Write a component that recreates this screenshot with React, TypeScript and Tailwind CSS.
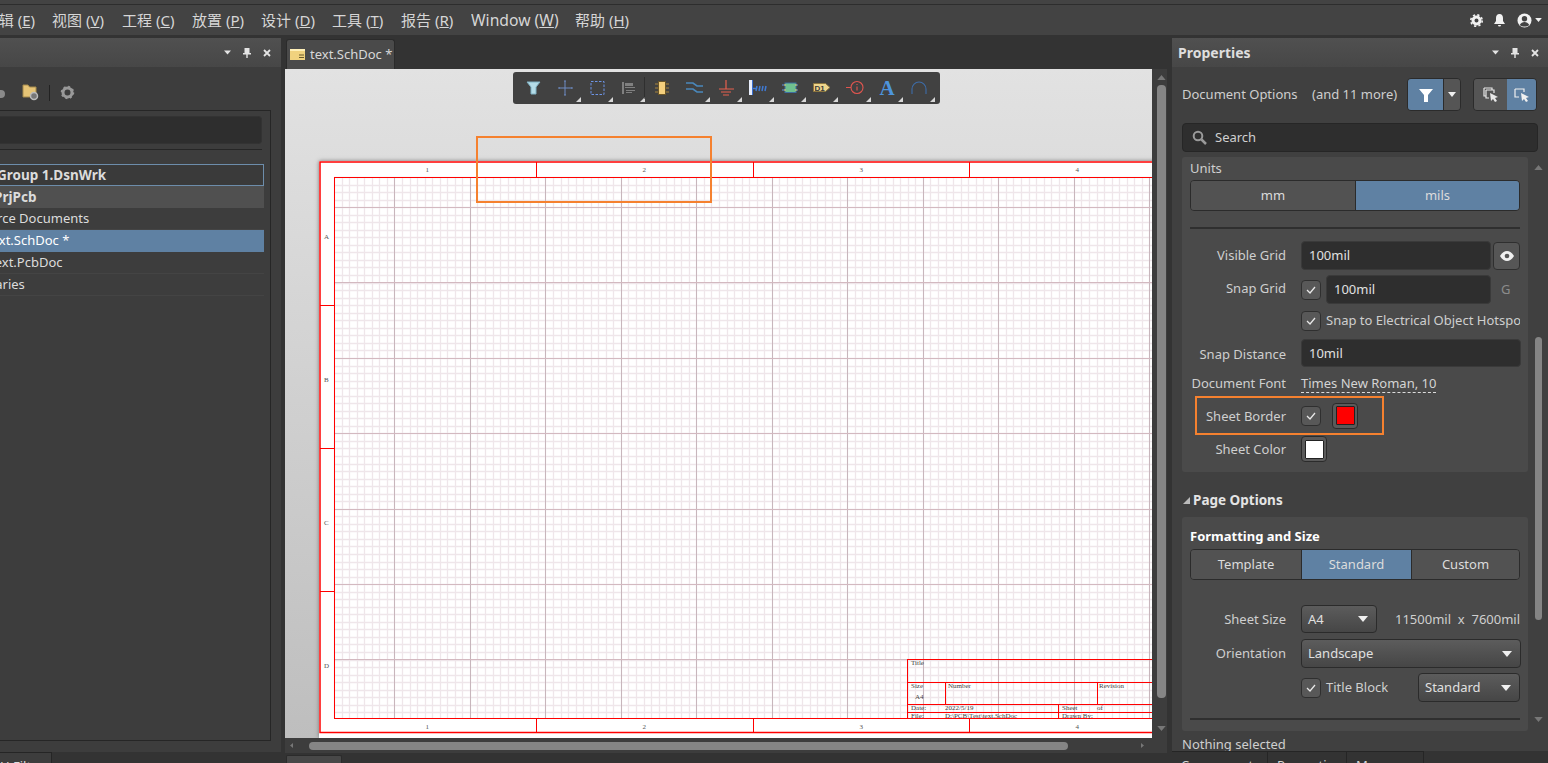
import type { ReactNode } from 'react'

const FONT = 'font-["Noto_Sans","Noto_Sans_CJK_SC",sans-serif]'

const MENU = [
  { zh: '编辑', key: 'E', width: 'w-[52px]', clip: true },
  { zh: '视图', key: 'V', width: 'w-[70px]' },
  { zh: '工程', key: 'C', width: 'w-[70px]' },
  { zh: '放置', key: 'P', width: 'w-[69px]' },
  { zh: '设计', key: 'D', width: 'w-[71px]' },
  { zh: '工具', key: 'T', width: 'w-[69px]' },
  { zh: '报告', key: 'R', width: 'w-[70px]' },
  { zh: 'Window', key: 'W', width: 'w-[104px] pt-[2px] text-[15.7px]' },
  { zh: '帮助', key: 'H', width: 'w-[70px]' },
]

function Caret({ className = '' }: { className?: string }) {
  return (
    <svg width="10" height="6" viewBox="0 0 10 6" className={`shrink-0 ${className}`}>
      <path d="M0 0h10L5 6z" fill="currentColor" />
    </svg>
  )
}

function Pin() {
  return (
    <svg width="8" height="10" viewBox="0 0 8 10">
      <path d="M1.500 0h5v5H8v1.500H4.700V10H3.300V6.500H0V5h1.500z" fill="#e4e4e4" />
    </svg>
  )
}

function Cross() {
  return (
    <svg width="8" height="8" viewBox="0 0 8 8">
      <path d="M1 1l6 6M7 1L1 7" stroke="#e4e4e4" strokeWidth="1.800" />
    </svg>
  )
}

function PanelHeader({ title, gap }: { title?: string; gap: string }) {
  return (
    <div className="flex h-[29px] shrink-0 items-center bg-gradient-to-b from-[#505050] to-[#474747] pl-[6px]">
      <span className="flex-1 text-[14px] font-bold text-[#dedede]">{title}</span>
      <div className={`flex items-center gap-[12px] ${gap}`}>
        <Caret className="h-[5px] w-[7px] text-[#e4e4e4]" />
        <Pin />
        <Cross />
      </div>
    </div>
  )
}

function TreeRow({ text, shift, className = '' }: { text: string; shift: string; className?: string }) {
  return (
    <div className={`flex h-[22px] items-center overflow-hidden whitespace-nowrap border-b border-[#444] pt-px text-[13px] ${className}`}>
      <span className={shift}>{text}</span>
    </div>
  )
}

function LeftPanel() {
  return (
    <div className="flex w-[281px] shrink-0 flex-col bg-[#3d3d3d]">
      <PanelHeader gap="pr-[10px]" />
      <div className="flex h-[43px] shrink-0 items-center pt-[8px]">
        <svg width="8" height="12" viewBox="0 0 8 12">
          <circle cx="1" cy="7" r="4" fill="#8a8a8a" />
        </svg>
        <svg width="18" height="17" viewBox="0 0 18 17" className="ml-[14px]">
          <path d="M1 1h5l1.500 2H14v10H1z" fill="#e6c476" stroke="#a58a4c" />
          <circle cx="12" cy="12" r="3.500" fill="#777" stroke="#bbb" strokeWidth="1.500" />
        </svg>
        <div className="ml-[9px] h-[16px] w-px bg-[#222]" />
        <svg width="15" height="15" viewBox="0 0 15 15" className="ml-[10px]">
          <circle cx="7.500" cy="7.500" r="4.500" fill="none" stroke="#999" strokeWidth="3" />
          <circle cx="7.500" cy="7.500" r="6" fill="none" stroke="#999" strokeWidth="1.500" strokeDasharray="2 2.700" />
        </svg>
      </div>
      <div className="mr-[10px] flex h-[631px] shrink-0 flex-col border-y border-r border-[#262626] pr-[8px] pt-[5px]">
        <div className="h-[28px] shrink-0 rounded-r-[4px] border border-l-0 border-[#333] bg-[#2e2e2e]" />
        <div className="mt-[5px] h-px shrink-0 bg-[#262626]" />
        <div className="mt-[14px] -mr-[2px] flex flex-col text-[#dcdcdc]">
          <div className="flex h-[22px] items-center overflow-hidden whitespace-nowrap border border-l-0 border-[#6d8dab] bg-[#3a3a3a] text-[13.5px] font-bold">
            <span className="-ml-[3px]">Group 1.DsnWrk</span>
          </div>
          <TreeRow text="text.PrjPcb" shift="-ml-[37px] font-bold text-[13.5px]" className="border-transparent bg-[#505050]" />
          <TreeRow text="Source Documents" shift="-ml-[26px]" />
          <TreeRow text="text.SchDoc *" shift="-ml-[13px] text-white" className="border-transparent bg-[#5f81a3]" />
          <TreeRow text="text.PcbDoc" shift="-ml-[10px]" />
          <TreeRow text="Libraries" shift="-ml-[28px]" />
        </div>
      </div>
      <div className="mt-[11px] flex flex-1 overflow-hidden bg-[#333]">
        <div className="h-[20px] w-[52px] overflow-hidden whitespace-nowrap border-r border-t border-[#252525] bg-[#3d3d3d] pt-[4px] text-right text-[13px] leading-[18px] text-[#dcdcdc]">
          <span className="pr-[20px]">H Filt</span>
        </div>
      </div>
    </div>
  )
}

function Triangle({ on = true }: { on?: boolean }) {
  if (!on) return null
  return <path d="M32 27v-5l-5 5z" fill="#d8d8d8" />
}

const TOOL_ICONS: { corner: boolean; draw: ReactNode }[] = [
  { corner: false, draw: <path d="M10 7h13l-4 5v7h-5v-7z" fill="#b4dce8" stroke="#7fb1c4" /> },
  {
    corner: true,
    draw: (
      <g stroke="#6f8cc4" strokeWidth="1" fill="none">
        <path d="M16 6v14M10 13h13M15 6h2M15 20h2M10 12v2M23 12v2" />
      </g>
    ),
  },
  { corner: true, draw: <rect x="10" y="6.500" width="13" height="13" fill="none" stroke="#6d94e6" strokeWidth="1" strokeDasharray="2.500 1.500" /> },
  {
    corner: true,
    draw: (
      <g fill="#808080">
        <rect x="9" y="7" width="2" height="12" />
        <rect x="12" y="8" width="8" height="3" />
        <rect x="12" y="12" width="10" height="1" />
        <path d="M13 15h9v1h-9zM13 17h6v1h-6z" />
      </g>
    ),
  },
  {
    corner: false,
    draw: (
      <g>
        <path d="M9 9h14M9 13h14M9 17h14" stroke="#a8853e" />
        <rect x="12.500" y="6.500" width="7" height="13" fill="#f4cf7d" stroke="#6b5628" />
      </g>
    ),
  },
  {
    corner: true,
    draw: (
      <g stroke="#4a88bc" strokeWidth="1.600" fill="none">
        <path d="M8 8h7l4 3h6M8 14h7l4 3h6" />
      </g>
    ),
  },
  {
    corner: true,
    draw: (
      <g stroke="#e8604e" strokeWidth="1.200">
        <path d="M16 5v9M9 14h15M11 17h10M13 20h6" />
      </g>
    ),
  },
  {
    corner: true,
    draw: (
      <g>
        <rect x="7" y="5" width="3" height="15" fill="#e8eefc" />
        <rect x="10" y="5" width="1" height="15" fill="#3a6fd0" />
        <path d="M14 16l1-5M17 16l1-5M20 16l1-5M23 16l1-5M11 13.500h3" stroke="#3f7ad4" strokeWidth="1.500" />
      </g>
    ),
  },
  {
    corner: true,
    draw: (
      <g>
        <path d="M8 10h16M8 15h16" stroke="#5f8fe0" strokeDasharray="2 1" />
        <rect x="11" y="8" width="11" height="9.500" fill="#6fc08f" stroke="#3f6fa0" />
        <path d="M11 9v2M11 14v2M22 9v2M22 14v2" stroke="#f0e070" />
      </g>
    ),
  },
  {
    corner: true,
    draw: (
      <g>
        <path d="M7.500 8.500h12l4.500 4-4.500 4h-12z" fill="#efd58c" stroke="#8d7740" />
        <text x="8.500" y="15.500" fontFamily="Liberation Sans" fontSize="8" fontWeight="bold" fill="#3a3a3a">D1</text>
      </g>
    ),
  },
  {
    corner: true,
    draw: (
      <g stroke="#e0554f" fill="none" strokeWidth="1.100">
        <circle cx="18" cy="12.500" r="6" />
        <path d="M7 12.500h5M18 9v1M18 11.500v4" />
      </g>
    ),
  },
  { corner: true, draw: <text x="16" y="20" textAnchor="middle" fontFamily="Liberation Serif" fontSize="21" fontWeight="bold" fill="#4d94dc">A</text> },
  { corner: true, draw: <path d="M9 19v-5a7 7 0 0 1 14 0v5" fill="none" stroke="#3d6ca8" strokeWidth="1.100" /> },
]

function ToolStrip() {
  return (
    <div className="absolute left-[228px] top-[3px] flex h-[32px] items-center gap-[0.17px] rounded-[3px] bg-[#414141] pl-[4px] pr-[5px]">
      {TOOL_ICONS.map((tool, i) => (
        <svg key={i} width="32" height="27" viewBox="0 0 32 27" className="mt-px shrink-0">
          {tool.draw}
          <Triangle on={tool.corner} />
          {i === 3 && <path d="M32 2v22" stroke="#1f1f1f" />}
        </svg>
      ))}
    </div>
  )
}

const range = (start: number, step: number, end: number) => {
  const out: number[] = []
  for (let v = start; v <= end; v += step) out.push(Math.round(v) + 0.5)
  return out
}

// sheet is in screen coordinates through the viewBox, simplest way to check against the picture
function Sheet() {
  const minorX = range(334, 7.55, 1152)
  const minorY = range(177, 7.54, 718)
  const majorX = range(394, 75.5, 1152)
  const majorY = range(207, 75.4, 700)
  const red = '#ff0000'
  const cell = (x: number, y: number, s: string) => (
    <text key={s + x} x={x} y={y} fontFamily="Liberation Serif" fontSize="7" fill="#444">{s}</text>
  )
  return (
    <svg width="840" height="577" viewBox="319 161 840 577" className="ml-[34px] mt-[92px] block shrink-0 bg-white shadow-[0_0_4px_#777]">
      {minorX.map(x => <path key={x} d={`M${x} 177V718`} stroke="#efe6ea" strokeWidth="1.300" />)}
      {minorY.map(y => <path key={y} d={`M334 ${y}H1160`} stroke="#efe6ea" strokeWidth="1.300" />)}
      <g shapeRendering="crispEdges">
        {majorX.map(x => <path key={x} d={`M${x} 177V718`} stroke="#c8b6bc" />)}
        {majorY.map(y => <path key={y} d={`M334 ${y}H1160`} stroke="#d3b9c0" />)}
        <path d="M1170 177.500H334.500V718.500H1170" fill="none" stroke={red} />
        {[536, 753, 969].map(x => (
          <path key={x} d={`M${x + 0.5} 162V177M${x + 0.5} 718V732`} stroke={red} />
        ))}
        {[305, 448, 591].map(y => <path key={y} d={`M320 ${y + 0.5}H334`} stroke={red} />)}
        <g stroke={red} fill="none">
          <path d="M907.500 718V659.500H1170M907 682.500H1170M907 704.500H1170M907 712.500H1170" />
          <path d="M945.500 682V704M1097.500 682V704M1058.500 704V718" />
        </g>
      </g>
      <rect x="320" y="162" width="860" height="570.500" fill="none" stroke={red} strokeWidth="1.500" />
      {[[425.500, '1'], [642.500, '2'], [859.500, '3'], [1075.500, '4']].map(([x, s]) => (
        <g key={s} fontFamily="Liberation Serif" fontSize="7" fill="#555">
          <text x={x} y="172">{s}</text>
          <text x={x} y="729">{s}</text>
        </g>
      ))}
      {[[239, 'A'], [382, 'B'], [525, 'C'], [668, 'D']].map(([y, s]) => (
        <text key={s} x="324" y={y} fontFamily="Liberation Serif" fontSize="7" fill="#555">{s}</text>
      ))}
      {cell(911, 665, 'Title')}
      {cell(911, 688, 'Size')}
      {cell(915, 699, 'A4')}
      {cell(948, 688, 'Number')}
      {cell(1099, 688, 'Revision')}
      {cell(911, 710, 'Date:')}
      {cell(945, 710, '2022/5/19')}
      {cell(1062, 710, 'Sheet')}
      {cell(1097, 710, 'of')}
      {cell(911, 718, 'File:')}
      {cell(945, 718, 'D:\\PCB\\Test\\text.SchDoc')}
      {cell(1062, 718, 'Drawn By:')}
    </svg>
  )
}

function Editor() {
  return (
    <div className="flex w-[882px] shrink-0 flex-col">
      <div className="flex h-[31px] shrink-0 pl-px">
        <div className="mt-px flex h-[30px] w-[109px] items-center rounded-t-[3px] border border-b-0 border-[#2b2b2b] bg-[#4a4a4a] pl-[3px]">
          <svg width="15" height="11" viewBox="0 0 15 11" className="shrink-0">
            <rect width="15" height="11" fill="#f0d27e" />
            <path d="M0 0h15v2H0z" fill="#fff0b8" />
            <path d="M9 6h5M9 8.500h5" stroke="#6b5a2a" />
          </svg>
          <span className="ml-[5px] whitespace-nowrap text-[13px] text-[#d8d8d8]">text.SchDoc *</span>
        </div>
      </div>
      <div className="flex h-[669px] shrink-0">
        <div className="relative flex w-[867px] shrink-0 flex-col overflow-hidden bg-gradient-to-b from-[#e2e2e2] to-[#bebebe]">
          <Sheet />
          <ToolStrip />
          <div className="absolute left-[191px] top-[67px] h-[67px] w-[236px] border-2 border-[#f5812f]" />
        </div>
        <div className="flex w-[15px] shrink-0 flex-col items-center bg-[#3d3d3d] pl-[4px]">
          <Caret className="mt-[6px] h-[5px] w-[9px] rotate-180 text-[#777]" />
          <div className="mt-[5px] h-[613px] w-[9px] rounded-[4px] bg-[#858585]" />
          <Caret className="mt-[28px] h-[5px] w-[9px] text-[#777]" />
        </div>
      </div>
      <div className="flex h-[15px] shrink-0 items-center bg-[#3d3d3d]">
        <Caret className="ml-[4px] h-[9px] w-[5px] rotate-90 text-[#777]" />
        <div className="ml-[15px] h-[8px] w-[759px] rounded-[4px] bg-[#858585]" />
        <Caret className="ml-[72px] h-[9px] w-[5px] -rotate-90 text-[#777]" />
      </div>
      <div className="flex flex-1 bg-[#333] pl-px pt-[2px]">
        <div className="w-[56px] rounded-t-[2px] border border-b-0 border-[#2b2b2b] bg-[#484848]" />
      </div>
    </div>
  )
}

function Segments({ items, active, width }: { items: string[]; active: string; width: string[] }) {
  return (
    <div className="flex h-[31px] shrink-0 overflow-hidden rounded-[4px] border border-[#2b2b2b] text-[13px] text-[#dcdcdc]">
      {items.map((item, i) => (
        <div
          key={item}
          className={`flex items-center justify-center ${width[i]} ${i > 0 ? 'border-l border-[#2b2b2b]' : ''} ${item === active ? 'bg-[#5f81a3]' : 'bg-[#525252]'}`}
        >
          {item}
        </div>
      ))}
    </div>
  )
}

function Label({ children }: { children: ReactNode }) {
  return <div className="w-[96px] shrink-0 whitespace-nowrap pt-px text-right text-[13px] text-[#cfcfcf]">{children}</div>
}

function Field({ value, className = '' }: { value: string; className?: string }) {
  return (
    <div className={`flex h-full shrink-0 items-center rounded-[4px] border border-[#3a3a3a] bg-[#2e2e2e] pl-[7px] pt-px text-[13px] text-[#e0e0e0] ${className}`}>
      {value}
    </div>
  )
}

function Check({ className = '' }: { className?: string }) {
  return (
    <div className={`flex h-[20px] w-[20px] shrink-0 items-center justify-center rounded-[4px] border border-[#2f2f2f] bg-[#585858] ${className}`}>
      <svg width="10" height="8" viewBox="0 0 10 8">
        <path d="M1 4l3 3 5-6" fill="none" stroke="#e8e8e8" strokeWidth="1.300" />
      </svg>
    </div>
  )
}

function Swatch({ color, className = '' }: { color: string; className?: string }) {
  return (
    <div className={`flex h-[26px] w-[26px] shrink-0 items-center justify-center rounded-[4px] border border-[#2b2b2b] bg-[#5a5a5a] ${className}`}>
      <div className={`h-[19px] w-[19px] rounded-[1px] border border-[#222] ${color}`} />
    </div>
  )
}

function Dropdown({ value, className = '' }: { value: string; className?: string }) {
  return (
    <div className={`flex h-full shrink-0 items-center justify-between rounded-[4px] border border-[#2b2b2b] bg-gradient-to-b from-[#5c5c5c] to-[#464646] pl-[6px] pr-[8px] text-[13px] text-[#e0e0e0] ${className}`}>
      <span className="pt-px">{value}</span>
      <Caret className="text-[#f0f0f0]" />
    </div>
  )
}

function PropertiesPanel() {
  return (
    <div className="flex w-[376px] shrink-0 flex-col bg-[#404040]">
      <PanelHeader title="Properties" gap="pr-[9px]" />
      <div className="mt-[11px] flex h-[33px] shrink-0 items-center pl-[10px]">
        <span className="w-[130px] shrink-0 whitespace-nowrap text-[13px] text-[#cfcfcf]">Document Options</span>
        <span className="w-[95px] shrink-0 whitespace-nowrap text-[13px] text-[#cfcfcf]">(and 11 more)</span>
        <div className="flex h-[33px] w-[54px] shrink-0 overflow-hidden rounded-[4px] border border-[#2b2b2b]">
          <div className="flex w-[35px] items-center justify-center bg-[#5f81a3]">
            <svg width="14" height="14" viewBox="0 0 14 14">
              <path d="M0 1h14L9 7v7H5V7z" fill="#fff" />
            </svg>
          </div>
          <div className="flex flex-1 items-center justify-center border-l border-[#2b2b2b] bg-[#555]">
            <Caret className="h-[5px] w-[8px] text-[#f0f0f0]" />
          </div>
        </div>
        <div className="ml-[12px] flex h-[33px] w-[64px] shrink-0 overflow-hidden rounded-[4px] border border-[#2b2b2b]">
          <div className="flex w-[33px] items-center justify-center bg-[#555]">
            <svg width="16" height="16" viewBox="0 0 16 16">
              <path d="M1 1h8v2M1 1v8h2M3 3h8v3M3 3v8h3" fill="none" stroke="#e8e8e8" strokeWidth="1.200" />
              <path d="M7 6l8 4-3 1 2 3-2 1-2-3-2 2z" fill="#e8e8e8" />
            </svg>
          </div>
          <div className="flex flex-1 items-center justify-center bg-[#5f81a3]">
            <svg width="16" height="16" viewBox="0 0 16 16">
              <path d="M1 2h9v3M1 2v8h4" fill="none" stroke="#f0f0f0" strokeWidth="1.200" />
              <path d="M7 6l8 4-3 1 2 3-2 1-2-3-2 2z" fill="#f0f0f0" />
            </svg>
          </div>
        </div>
      </div>
      <div className="ml-[10px] mt-[12px] flex h-[29px] w-[356px] shrink-0 items-center rounded-[4px] border border-[#262626] bg-[#2e2e2e] pl-[9px]">
        <svg width="15" height="15" viewBox="0 0 15 15">
          <circle cx="6" cy="6" r="4.300" fill="none" stroke="#9a9a9a" strokeWidth="2" />
          <path d="M9.500 9.500L14 14" stroke="#9a9a9a" strokeWidth="2.500" />
        </svg>
        <span className="ml-[8px] text-[13px] text-[#d0d0d0]">Search</span>
      </div>
      <div className="mt-[5px] flex h-[574px] shrink-0 overflow-hidden">
        <div className="ml-[10px] w-[346px] shrink-0">
          <div className="relative flex h-[315px] flex-col rounded-[3px] bg-[#4a4a4a] px-[8px]">
            <div className="flex h-[23px] shrink-0 items-end pb-[2px] text-[13px] leading-[20px] text-[#cfcfcf]">Units</div>
            <Segments items={['mm', 'mils']} active="mils" width={['w-[164px]', 'flex-1']} />
            <div className="mt-[16px] h-[2px] shrink-0 bg-[#2f2f2f]" />
            <div className="mt-[12px] flex h-[29px] items-center">
              <Label>Visible Grid</Label>
              <Field value="100mil" className="ml-[15px] w-[190px]" />
              <div className="ml-[2px] flex h-[28px] w-[28px] items-center justify-center rounded-[4px] border border-[#2f2f2f] bg-[#565656]">
                <svg width="14" height="10" viewBox="0 0 14 10">
                  <path d="M0 5c2-3.500 4.500-5 7-5s5 1.500 7 5c-2 3.500-4.500 5-7 5S2 8.500 0 5z" fill="#f0f0f0" />
                  <circle cx="7" cy="5" r="2.300" fill="#565656" />
                </svg>
              </div>
            </div>
            <div className="mt-[5px] flex h-[29px] items-center">
              <div className="-mt-[2px]"><Label>Snap Grid</Label></div>
              <Check className="ml-[15px]" />
              <Field value="100mil" className="ml-[5px] w-[165px]" />
              <span className="ml-[10px] text-[13px] text-[#8c8c8c]">G</span>
            </div>
            <div className="mt-[7px] flex h-[19px] items-center">
              <Check className="ml-[111px]" />
              <span className="ml-[5px] w-[195px] overflow-hidden whitespace-nowrap text-[13px] text-[#cfcfcf]">Snap to Electrical Object Hotspots</span>
            </div>
            <div className="mt-[9px] flex h-[28px] items-center">
              <div className="pt-[2px]"><Label>Snap Distance</Label></div>
              <Field value="10mil" className="ml-[15px] w-[220px]" />
            </div>
            <div className="mt-[6px] flex h-[20px] items-center">
              <Label>Document Font</Label>
              <span className="ml-[15px] whitespace-nowrap border-b border-dashed border-[#dcdcdc] text-[13px] leading-[18px] text-[#d4d4d4]">Times New Roman, 10</span>
            </div>
            <div className="mt-[9px] flex h-[27px] items-center">
              <div className="pt-[2px]"><Label>Sheet Border</Label></div>
              <Check className="ml-[15px]" />
              <Swatch color="bg-[#ff0000]" className="ml-[11px]" />
            </div>
            <div className="mt-[7px] flex h-[26px] items-center">
              <Label>Sheet Color</Label>
              <Swatch color="bg-white" className="ml-[15px]" />
            </div>
            <div className="absolute left-[13px] top-[239px] h-[39px] w-[189px] border-2 border-[#f5812f]" />
          </div>
          <div className="flex h-[45px] items-center pt-[11px] text-[13.5px] font-bold text-[#e4e4e4]">
            <svg width="7" height="7" viewBox="0 0 7 7" className="ml-[1px] mr-[3px]">
              <path d="M7 0v7H0z" fill="#bbb" />
            </svg>
            <span>Page Options</span>
          </div>
          <div className="flex h-[214px] flex-col rounded-[3px] bg-[#4a4a4a] px-[8px]">
            <div className="flex h-[32px] shrink-0 items-end pb-[3px] text-[13px] font-bold leading-[20px] text-white">Formatting and Size</div>
            <Segments items={['Template', 'Standard', 'Custom']} active="Standard" width={['w-[110px]', 'w-[110px]', 'flex-1']} />
            <div className="mt-[25px] flex h-[28px] items-center">
              <Label>Sheet Size</Label>
              <Dropdown value="A4" className="ml-[15px] w-[76px]" />
              <span className="ml-[18px] whitespace-nowrap pt-px text-[13px] text-[#cfcfcf]">11500mil&nbsp; x&nbsp; 7600mil</span>
            </div>
            <div className="mt-[6px] flex h-[29px] items-center">
              <Label>Orientation</Label>
              <Dropdown value="Landscape" className="ml-[15px] w-[220px]" />
            </div>
            <div className="mt-[5px] flex h-[29px] items-center">
              <Check className="ml-[111px]" />
              <span className="ml-[5px] w-[94px] whitespace-nowrap pt-px text-[13px] text-[#cfcfcf]">Title Block</span>
              <Dropdown value="Standard" className="w-[102px]" />
            </div>
            <div className="mt-[16px] h-[2px] shrink-0 bg-[#2f2f2f]" />
          </div>
        </div>
        <div className="flex w-[20px] shrink-0 flex-col pl-[6px]">
          <Caret className="mt-[8px] h-[5px] w-[9px] rotate-180 text-[#777]" />
          <div className="ml-px mt-[167px] h-[283px] w-[7px] rounded-[4px] bg-[#858585]" />
          <Caret className="mt-[97px] h-[5px] w-[9px] text-[#777]" />
        </div>
      </div>
      <div className="h-[20px] shrink-0 overflow-hidden pl-[10px] pt-[4px] text-[13px] leading-[18px] text-[#cfcfcf]">Nothing selected</div>
      <div className="flex flex-1 overflow-hidden bg-[#333] text-[13px] leading-[18px] text-[#d4d4d4]">
        {[['Components', 'w-[96px]'], ['Properties', 'w-[79px]'], ['Messages', 'w-[77px]']].map(([tab, w]) => (
          <div key={tab} className={`${w} h-[24px] overflow-hidden whitespace-nowrap border-r border-t border-[#252525] pl-[9px] pt-[4px]`}>{tab}</div>
        ))}
      </div>
    </div>
  )
}

export default function App() {
  return (
    <div className={`flex h-[763px] w-[1548px] flex-col overflow-hidden bg-[#333] ${FONT}`}>
      <div className="h-[4px] shrink-0 bg-[#434343]" />
      <div className="flex h-[31px] shrink-0 items-center border-t border-[#2d2d2d] bg-[#434343] text-[15px] text-[#d6d6d6]">
        {MENU.map(item => (
          <div key={item.key} className={`${item.width} shrink-0 overflow-hidden whitespace-nowrap ${item.clip ? 'flex justify-end pr-[17px]' : ''}`}>
            {item.zh} (<span className="underline">{item.key}</span>)
          </div>
        ))}
        <div className="ml-auto flex items-center pr-[6px]">
          <svg width="13" height="13" viewBox="0 0 13 13">
            <circle cx="6.500" cy="6.500" r="3.500" fill="none" stroke="#f2f2f2" strokeWidth="3" />
            <circle cx="6.500" cy="6.500" r="5.700" fill="none" stroke="#f2f2f2" strokeWidth="1.600" strokeDasharray="2.200 2.300" />
          </svg>
          <svg width="11" height="13" viewBox="0 0 11 13" className="ml-[11px]">
            <path d="M5.500 0C3 0 2 2 2 4v3L0 10h11L9 7V4c0-2-1-4-3.500-4zM4 11h3a1.500 1.500 0 0 1-3 0z" fill="#f2f2f2" />
          </svg>
          <svg width="15" height="15" viewBox="0 0 15 15" className="ml-[12px]">
            <circle cx="7.500" cy="7.500" r="7" fill="#f2f2f2" />
            <circle cx="7.500" cy="5.700" r="2.700" fill="#434343" />
            <path d="M2.700 12c1-2 3-3 4.800-3s3.800 1 4.800 3c-1.300 1-3 1.500-4.800 1.500S4 13 2.700 12z" fill="#434343" />
          </svg>
          <Caret className="ml-[3px] h-[4px] w-[7px] text-[#f2f2f2]" />
        </div>
      </div>
      <div className="flex h-[728px] shrink-0 pt-[3px]">
        <LeftPanel />
        <div className="w-[4px] shrink-0" />
        <Editor />
        <div className="w-[5px] shrink-0" />
        <PropertiesPanel />
      </div>
    </div>
  )
}
